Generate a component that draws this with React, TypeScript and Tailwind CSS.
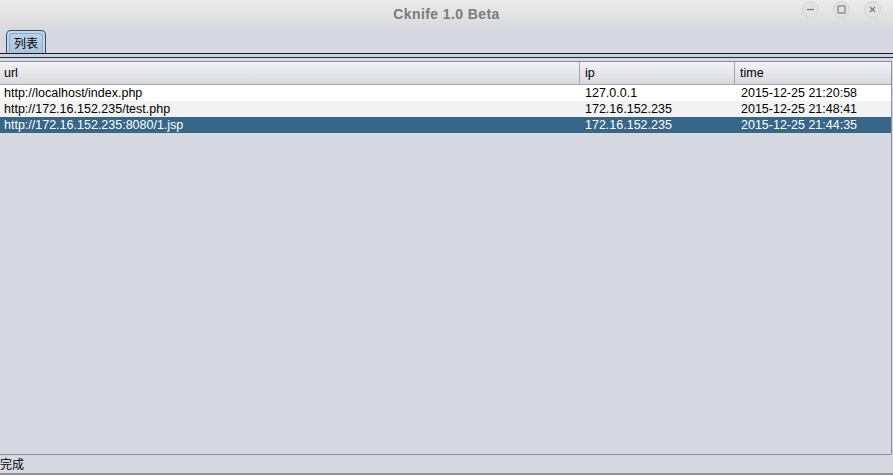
import React from 'react';

const rows = [
  { url: 'http://localhost/index.php', ip: '127.0.0.1', time: '2015-12-25 21:20:58' },
  { url: 'http://172.16.152.235/test.php', ip: '172.16.152.235', time: '2015-12-25 21:48:41' },
  { url: 'http://172.16.152.235:8080/1.jsp', ip: '172.16.152.235', time: '2015-12-25 21:44:35' },
];

const WinButton: React.FC<{ children: React.ReactNode }> = ({ children }) => (
  <div className="w-[17px] h-[17px] rounded-full bg-[#e2e2e2] border border-[#d4d4d4] flex items-center justify-center">
    {children}
  </div>
);

const App: React.FC = () => {
  return (
    <div className="w-[893px] h-[475px] flex flex-col bg-[#d6d9e1] overflow-hidden font-['Liberation_Sans','Noto_Sans_CJK_SC',sans-serif] text-[12.5px] text-black">
      {/* Title bar */}
      <div className="h-[28px] shrink-0 relative flex items-center justify-center bg-gradient-to-b from-[#ececec] to-[#dadada]">
        <span className="text-[14px] font-bold text-[#7c7c7c] tracking-[0.4px]">Cknife 1.0 Beta</span>
        <div className="absolute right-[12px] top-[1px] flex gap-[14px]">
          <WinButton>
            <svg width="9" height="9" viewBox="0 0 9 9"><path d="M1 4.5h7" stroke="#777" strokeWidth="1.2" /></svg>
          </WinButton>
          <WinButton>
            <svg width="9" height="9" viewBox="0 0 9 9"><rect x="1" y="1" width="7" height="7" fill="none" stroke="#777" strokeWidth="1.1" /></svg>
          </WinButton>
          <WinButton>
            <svg width="9" height="9" viewBox="0 0 9 9"><path d="M2 2l5 5M7 2l-5 5" stroke="#777" strokeWidth="1.1" /></svg>
          </WinButton>
        </div>
      </div>

      {/* Tab strip */}
      <div className="h-[25px] shrink-0 flex items-end pl-[6px] pt-[3px]">
        <div className="h-[23px] w-[40px] rounded-t-[5px] border border-b-0 border-[#3a4a5a] bg-[#c5d6e8] p-[2px] pb-0">
          <div className="h-full rounded-t-[3px] border border-b-0 border-[#7fb0dd] bg-gradient-to-b from-[#bcd2e8] to-[#a9c3de] flex items-center justify-center">
            <span className="text-[12px] leading-none">列表</span>
          </div>
        </div>
      </div>
      <div className="h-[1px] shrink-0 bg-[#1a1a1a]" />
      <div className="h-[3px] shrink-0 bg-[#c5d3e3]" />
      <div className="h-[1px] shrink-0 bg-[#2a2a2a]" />

      {/* Table area */}
      <div className="h-[394px] shrink-0 mt-[3px] mr-[1px] flex flex-col border border-l-0 border-[#8e9199]">
        <div className="h-[23px] shrink-0 flex bg-gradient-to-b from-[#f2f2f4] via-[#e6e7ea] to-[#d7d8dc] border-b border-[#a3a5ab]">
          <div className="w-[580px] px-[4px] flex items-center border-r border-[#a3a5ab]">url</div>
          <div className="w-[155px] px-[5px] flex items-center border-r border-[#a3a5ab]">ip</div>
          <div className="flex-1 px-[5px] flex items-center">time</div>
        </div>
        {rows.map((r, i) => (
          <div
            key={i}
            className={
              'h-[16px] flex items-center leading-none ' +
              (i === 2 ? 'bg-[#376688] text-white' : i === 1 ? 'bg-[#f2f2f2]' : 'bg-white')
            }
          >
            <div className="w-[580px] pl-[4px]">{r.url}</div>
            <div className="w-[155px] pl-[5px]">{r.ip}</div>
            <div className="flex-1 pl-[6px]">{r.time}</div>
          </div>
        ))}
        <div className="flex-1" />
      </div>

      {/* Status bar */}
      <div className="flex-1 flex items-center">
        <span className="leading-none mt-[2px] text-[12px]">完成</span>
      </div>
      <div className="h-[2px] shrink-0 bg-[#8f9096]" />
    </div>
  );
};

export default App;
